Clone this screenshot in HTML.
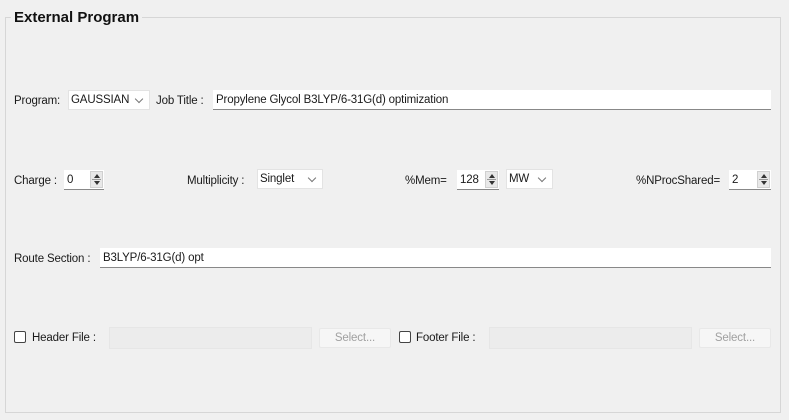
<!DOCTYPE html>
<html><head><style>
body{margin:0;width:789px;height:420px;background:#f0f0f0;font-family:"Liberation Sans",sans-serif;font-size:11.5px;letter-spacing:-0.15px;color:#1a1a1a;position:relative;overflow:hidden}
.a{position:absolute}
.lbl{position:absolute;line-height:14px;white-space:nowrap}
.fld{position:absolute;background:#fff;border-bottom:1px solid #888;box-sizing:border-box;padding-left:3px;line-height:20px;white-space:nowrap}
.cmb{position:absolute;background:#fff;border:1px solid #e3e3e3;box-sizing:border-box;padding-left:2px;line-height:19px}
.cmb:after{content:"";position:absolute;right:7px;top:5px;width:5px;height:5px;border-right:1px solid #777;border-bottom:1px solid #777;transform:rotate(45deg)}
.spin{position:absolute;right:1px;top:1px;width:13px;height:17px;background:#e8e8e8;border:1px solid #d0d0d0;box-sizing:border-box}
.spin:before{content:"";position:absolute;left:3px;top:2px;border:3px solid transparent;border-bottom:4px solid #333;border-top:0}
.spin:after{content:"";position:absolute;left:3px;bottom:2px;border:3px solid transparent;border-top:4px solid #333;border-bottom:0}
.spin i{position:absolute;left:1px;right:1px;top:7px;height:1px;background:#999}
.dis{position:absolute;background:#ececec;border:1px solid #e6e6e6;box-sizing:border-box}
.btn{position:absolute;background:#f6f6f6;border:1px solid #e8e8e8;border-radius:2px;box-sizing:border-box;color:#a0a0a0;text-align:center;line-height:18px}
.cb{position:absolute;width:12px;height:12px;border:1px solid #444;border-radius:2px;background:#fff;box-sizing:border-box}
</style></head><body>
<div class="a" style="left:5px;top:17px;width:776px;height:396px;border:1px solid #d6d6d6;box-sizing:border-box"></div>
<div class="lbl" style="left:11px;top:9px;background:#f0f0f0;padding:0 3px;font-size:15px;font-weight:bold;line-height:18px;color:#111;letter-spacing:0">External Program</div>

<div class="lbl" style="left:14px;top:94px">Program:</div>
<div class="cmb" style="left:68px;top:90px;width:82px;height:20px">GAUSSIAN</div>
<div class="lbl" style="left:156px;top:94px">Job Title :</div>
<div class="fld" style="left:213px;top:90px;width:558px;height:20px">Propylene Glycol B3LYP/6-31G(d) optimization</div>

<div class="lbl" style="left:14px;top:174px">Charge :</div>
<div class="fld" style="left:64px;top:170px;width:40px;height:20px">0<div class="spin"><i></i></div></div>
<div class="lbl" style="left:187px;top:174px">Multiplicity :</div>
<div class="cmb" style="left:257px;top:169px;width:66px;height:20px">Singlet</div>
<div class="lbl" style="left:405px;top:174px">%Mem=</div>
<div class="fld" style="left:457px;top:170px;width:42px;height:20px">128<div class="spin"><i></i></div></div>
<div class="cmb" style="left:506px;top:169px;width:47px;height:20px">MW</div>
<div class="lbl" style="left:636px;top:174px">%NProcShared=</div>
<div class="fld" style="left:729px;top:170px;width:42px;height:20px">2<div class="spin"><i></i></div></div>

<div class="lbl" style="left:14px;top:252px">Route Section :</div>
<div class="fld" style="left:100px;top:248px;width:671px;height:20px">B3LYP/6-31G(d) opt</div>

<div class="cb" style="left:14px;top:331px"></div>
<div class="lbl" style="left:32px;top:331px">Header File :</div>
<div class="dis" style="left:109px;top:327px;width:203px;height:22px"></div>
<div class="btn" style="left:319px;top:328px;width:72px;height:20px">Select...</div>
<div class="cb" style="left:399px;top:331px"></div>
<div class="lbl" style="left:416px;top:331px">Footer File :</div>
<div class="dis" style="left:489px;top:327px;width:203px;height:22px"></div>
<div class="btn" style="left:699px;top:328px;width:72px;height:20px">Select...</div>
</body></html>
